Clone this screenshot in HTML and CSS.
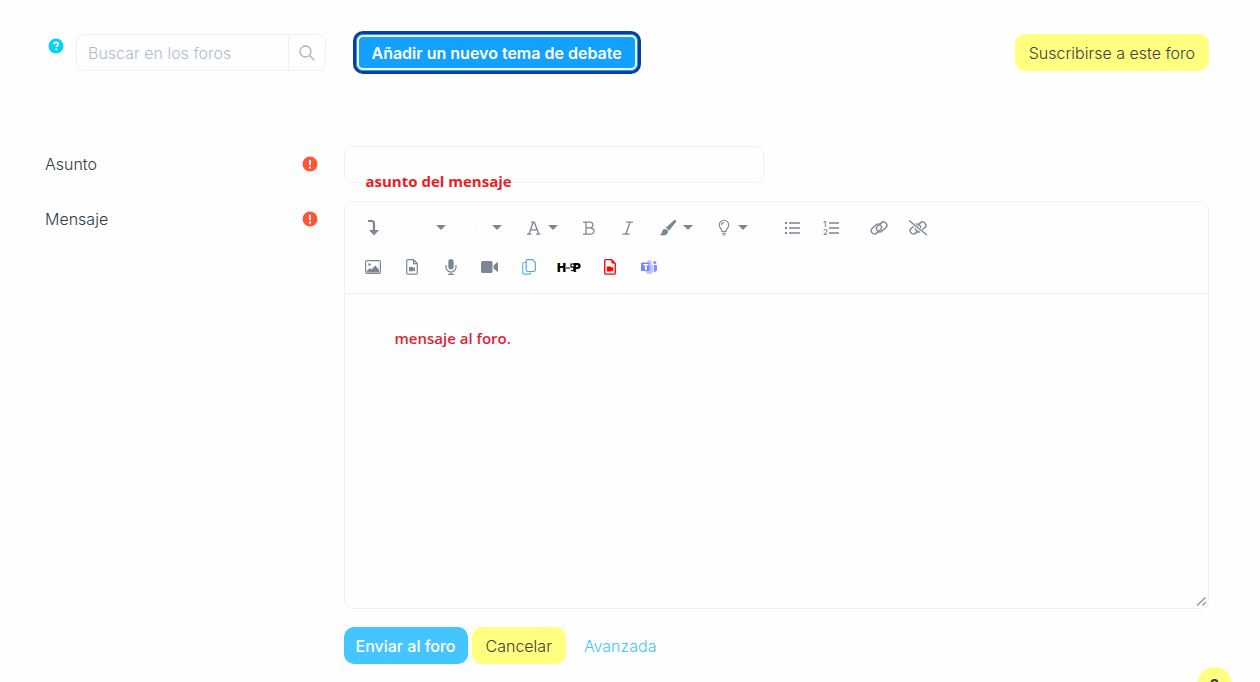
FILE: index.html
```
<!DOCTYPE html>
<html lang="es">
  <head>
    <meta charset="UTF-8" />
    <meta name="viewport" content="width=device-width, initial-scale=1.0" />
    <title>Foro</title>
    <link rel="stylesheet" href="styles.css">
  </head>
  <body>
    <main>
      <div class="topbar">
        <div class="search-col">
          <button class="help" type="button" aria-label="Ayuda">
            <svg width="16" height="16" viewBox="0 0 16 16"><circle cx="8" cy="8" r="7.5" fill="#00d2fa"/><path d="M5.8 6.3c.2-1.3 1-1.9 2.2-1.9 1.3 0 2.3.7 2.3 1.8 0 1.4-1.9 1.5-1.9 2.7" fill="none" stroke="#fff" stroke-width="1.8"/><circle cx="8.3" cy="11.3" r="1.1" fill="#fff"/></svg>
          </button>
          <form class="search" role="search">
            <input type="text" name="search" placeholder="Buscar en los foros" aria-label="Buscar en los foros" />
            <button type="submit" aria-label="Buscar">
              <svg width="16" height="16" viewBox="0 0 16 16" fill="none" stroke="#a3b1c2" stroke-width="1.3"><circle cx="6.5" cy="6.5" r="5.5"/><path d="M10.5 10.5l4.8 4.8"/></svg>
            </button>
          </form>
        </div>
        <div class="actions-col">
          <button class="btn btn-new" type="button">Añadir un nuevo tema de debate</button>
          <button class="btn btn-yellow" type="button">Suscribirse a este foro</button>
        </div>
      </div>

      <form class="post" action="#" method="post">
        <div class="row">
          <div class="label-col">
            <label for="subject">Asunto</label>
            <svg class="required" width="16" height="16" viewBox="0 0 16 16" role="img" aria-label="Obligatorio"><circle cx="8" cy="8" r="7.5" fill="#ff5638"/><path d="M8 4v5M8 10.5v2" stroke="#fff" stroke-width="2"/></svg>
          </div>
          <div class="field-col">
            <div class="subject">
              <input type="text" id="subject" name="subject" />
              <span class="note">asunto del mensaje</span>
            </div>
          </div>
        </div>

        <div class="row">
          <div class="label-col">
            <label for="message">Mensaje</label>
            <svg class="required" width="16" height="16" viewBox="0 0 16 16" role="img" aria-label="Obligatorio"><circle cx="8" cy="8" r="7.5" fill="#ff5638"/><path d="M8 4v5M8 10.5v2" stroke="#fff" stroke-width="2"/></svg>
          </div>
          <div class="field-col">
            <div class="editor">
              <div class="toolbar">
                <div class="tool-row">
                  <div class="group">
                    <button type="button" aria-label="Mostrar más botones"><svg width="16" height="18" viewBox="0 0 16 18"><path d="M3 2h3.500Q9 2 9 4.500V12" fill="none" stroke="#7b8794" stroke-width="2.2"/><path d="M4 11h10L9 16.500z" fill="#7b8794"/></svg></button>
                  </div>
                  <div class="group">
                    <button class="drop" type="button" aria-label="Estilos"><svg width="16" height="16" viewBox="0 0 16 16"><path d="M3 3h8M3 8h5M8 13h3" stroke="#fafafa"/></svg><i class="caret"></i></button>
                    <button class="drop" type="button" aria-label="Tamaño"><svg width="16" height="16" viewBox="0 0 16 16"><path d="M2 2h8M6 2v12M12 6v8" stroke="#fafafa"/></svg><i class="caret"></i></button>
                    <button class="drop" type="button" aria-label="Color de texto"><svg width="16" height="16" viewBox="0 0 16 16" fill="none" stroke="#7b8794" stroke-width="1.3"><path d="M3 14L7.300 2.200h1L12.800 14M4.500 9.800h6.800M5 2.200h3M1 14.200h4.500M10 14.200h4.500"/></svg><i class="caret"></i></button>
                    <button type="button" aria-label="Negrita"><svg width="14" height="16" viewBox="0 0 14 16" fill="none" stroke="#7b8794" stroke-width="1.3"><path d="M1 2.200H7.500C12 2.200 12 7.800 7.500 7.800H4M7.500 7.800C13.500 7.800 13.500 14.200 8 14.200H1M4 2.200v12"/></svg></button>
                    <button type="button" aria-label="Cursiva"><svg width="14" height="16" viewBox="0 0 14 16" fill="none" stroke="#7b8794" stroke-width="1.3"><path d="M5 2.200h7M1.500 14.200h7M9 2.200L4.800 14.200"/></svg></button>
                    <button class="drop" type="button" aria-label="Color de fondo"><svg width="18" height="18" viewBox="0 0 18 18" fill="#7b8794"><path d="M16.800 1.200c-.7-.5-1.600-.1-2.300.5L6.500 9c1.700.3 2.800 1.400 3.200 3l6.800-8.300c.6-.8 1-1.900.3-2.500zM6.200 10c-2 0-2.900 1.300-3.200 3-.2 1.300-1.200 2.200-2.400 2.200 2.200 2.300 8.300 1.700 8.400-2.400 0-1.500-1.200-2.800-2.800-2.800z"/></svg><i class="caret"></i></button>
                    <button class="drop" type="button" aria-label="Sugerencias"><svg width="16" height="18" viewBox="0 0 16 18" fill="none" stroke="#7b8794" stroke-width="1.1"><path d="M6 12.500C6 10 3.300 9 3.300 6a4.700 4.700 0 019.400 0c0 3-2.700 4-2.700 6.500zM6 14.200h4M6.500 16h3M5.500 6c0-1.500 1-2.500 2.500-2.500"/></svg><i class="caret"></i></button>
                  </div>
                  <div class="group lists">
                    <button type="button" aria-label="Lista"><svg width="16" height="16" viewBox="0 0 16 16" stroke="#7b8794" stroke-width="1.4"><path d="M5 3h11M5 8h11M5 13h11"/><path d="M1 3h2M1 8h2M1 13h2" stroke-width="2"/></svg></button>
                    <button type="button" aria-label="Lista numerada"><svg width="16" height="18" viewBox="0 0 16 18" fill="none" stroke="#7b8794" stroke-width="1.4"><path d="M6 4h10M6 9h10M6 14h10"/><text x="0" y="8" class="digit">1</text><text x="0" y="16" class="digit">2</text></svg></button>
                  </div>
                  <div class="group">
                    <button type="button" aria-label="Enlace"><svg width="20" height="18" viewBox="0 0 20 18" fill="none" stroke="#7b8794" stroke-width="1.4"><rect x="1.500" y="7" width="11.500" height="6.500" rx="3.200" transform="rotate(-42 7 10)"/><rect x="7" y="4.500" width="11.500" height="6.500" rx="3.200" transform="rotate(-42 13 8)"/></svg></button>
                    <button type="button" aria-label="Quitar enlace"><svg width="20" height="18" viewBox="0 0 20 18" fill="none" stroke="#7b8794" stroke-width="1.4"><rect x="1.500" y="7" width="11.500" height="6.500" rx="3.200" transform="rotate(-42 7 10)"/><rect x="7" y="4.500" width="11.500" height="6.500" rx="3.200" transform="rotate(-42 13 8)"/><path d="M1.500 2l17 14" stroke="#fff" stroke-width="3"/><path d="M1 1.500l18 14.500"/></svg></button>
                  </div>
                </div>
                <div class="tool-row">
                  <div class="group">
                    <button type="button" aria-label="Imagen"><svg width="16" height="14" viewBox="0 0 16 14"><rect x=".6" y=".6" width="14.800" height="12.800" rx="1.500" fill="none" stroke="#7b8794" stroke-width="1.2"/><circle cx="4.500" cy="4.500" r="1.300" fill="#7b8794"/><path d="M2 12.500V10.500L5 8l1.500 1.500L10.300 5.500l3.700 4v3z" fill="#7b8794"/></svg></button>
                    <button type="button" aria-label="Archivo multimedia"><svg width="12" height="16" viewBox="0 0 12 16"><path d="M2 .7h5.500L11.300 4.500V14q0 1.200-1.200 1.200H2Q.7 15.200.7 14V2Q.7.700 2 .7zM7.500.7v4h3.800" fill="none" stroke="#7b8794" stroke-width="1.2"/><path d="M3 8h4v1.500L9 8v4.500L7 11.500v.7H3z" fill="#7b8794"/></svg></button>
                    <button type="button" aria-label="Grabar audio"><svg width="12" height="16" viewBox="0 0 12 16"><rect x="3.300" y="0" width="5.400" height="10.500" rx="2.700" fill="#7b8794"/><path d="M1 6v2a5 5 0 0010 0V6M6 13v2.500M3 15.300h6" fill="none" stroke="#7b8794" stroke-width="1.2"/></svg></button>
                    <button type="button" aria-label="Grabar vídeo"><svg width="18" height="12" viewBox="0 0 18 12" fill="#7b8794"><rect width="11.500" height="12" rx="1.500"/><path d="M12.500 4.500L17 .8v10.400l-4.500-3.700z"/></svg></button>
                    <button type="button" aria-label="Administrar archivos"><svg width="14" height="16" viewBox="0 0 14 16" fill="none" stroke-width="1.2"><path d="M4 3.500H2Q.7 3.500.7 5v9q0 1.200 1.300 1.200h5.500q1.300 0 1.300-1.700" stroke="#3fc4f0"/><path d="M5.500.7h5L13.300 3.500V11q0 1.500-1.300 1.500H5.500Q4.200 12.500 4.200 11V2Q4.200.7 5.500.7z" stroke="#5fa4cc"/></svg></button>
                    <button class="h5p" type="button" aria-label="H5P"><svg width="26" height="14" viewBox="0 0 26 14"><text x="0" y="12">H</text><path d="M9 8h4M17 4h-3v3q3-.5 3 1.800T14 10.500" fill="none" stroke="#000" stroke-width="1.1"/><text x="16" y="12">P</text></svg></button>
                    <button type="button" aria-label="Vídeo"><svg width="12" height="16" viewBox="0 0 12 16"><path d="M2 .7h5.500L11.300 4.500V14q0 1.200-1.200 1.200H2Q.7 15.200.7 14V2Q.7.700 2 .7z" fill="none" stroke="#f00" stroke-width="1.3"/><path d="M7.500.5L11.500 4.500h-4zM2.800 7.500h4.500v1.500L9.300 7.800v4.700l-2-1v1H2.800z" fill="#f00"/></svg></button>
                    <button type="button" aria-label="Teams"><svg width="18" height="16" viewBox="0 0 18 16"><circle cx="9.500" cy="3.500" r="2.500" fill="#c5caff"/><circle cx="14.800" cy="3.500" r="1.600" fill="#8b8cff"/><path d="M5.500 6h8v5q0 4-4 4t-4-4z" fill="#b8c6ff"/><path d="M14 6h3v4q0 3-3 3z" fill="#8b8cff"/><rect x="1" y="3.500" width="8.500" height="8.500" rx="1" fill="#7b83f5"/><text x="3" y="11" class="teams">T</text></svg></button>
                  </div>
                </div>
              </div>
              <textarea id="message" name="message">mensaje al foro.</textarea>
              <svg class="resize" width="11" height="11" viewBox="0 0 11 11" fill="none" stroke="#999" stroke-width="1.5"><path d="M1 9.500L9.500 1.500M6.500 9.500l3.500-3.500"/></svg>
            </div>
            <div class="buttons">
              <button class="btn btn-send" type="submit">Enviar al foro</button>
              <button class="btn btn-yellow" type="button">Cancelar</button>
              <a class="advanced" href="#">Avanzada</a>
            </div>
          </div>
        </div>
      </form>
    </main>

    <button class="float-help" type="button">?</button>
  </body>
</html>
```
FILE: styles.css
```
* {
  box-sizing: border-box;
}

body {
  margin: 0;
  background-color: #fefefe;
  color: #2f3a45;
  font-family: Inter, "Open Sans", sans-serif;
  font-size: 16px;
  font-weight: 300;
  line-height: 22px;
}

main {
  padding: 31px 36px 0 30px;
}

input,
textarea,
button {
  font: inherit;
  color: inherit;
}

button {
  padding: 0;
  border: none;
  background: none;
  cursor: pointer;
}

svg {
  display: block;
}

/* two columns, shared by the top bar and the form rows */
.topbar,
.row {
  display: grid;
  grid-template-columns: 1fr 3fr;
}

.topbar {
  margin-bottom: 72px;
}

.search-col,
.actions-col,
.label-col,
.field-col {
  min-width: 0;
  padding: 0 15px;
}

.search-col {
  display: flex;
  align-items: flex-start;
  padding: 3px 0 0 18px;
}

.help {
  margin-top: 4px;
}

.search {
  display: flex;
  flex: 1;
  min-width: 0;
  height: 37px;
  margin: 0 3px 0 12px;
  border: 1px solid #e9f3fd;
  border-radius: 8px;
}

.search input {
  flex: 1;
  min-width: 0;
  padding: 0 11px;
  border: none;
  background: none;
}

.search input::placeholder {
  color: #aebdcc;
}

.search button {
  display: flex;
  align-items: center;
  justify-content: center;
  width: 37px;
  border-left: 1px solid #e9f3fd;
}

.actions-col {
  display: flex;
  align-items: center;
  justify-content: space-between;
  padding-left: 24px;
}

.btn {
  height: 37px;
  padding: 0 14px;
  border-radius: 10px;
  white-space: nowrap;
}

.btn-new {
  height: 43px;
  border: 3px solid #06409a;
  padding: 0 16px;
  background-color: #14a0ff;
  box-shadow: inset 0 0 0 1px #14a0ff, inset 0 0 0 3px #fff;
  color: #fff;
  font-weight: 600;
}

.btn-yellow {
  background-color: #ffff80;
  color: #443c3c;
}

.btn-send {
  padding: 0 12px;
  background-color: #45c5ff;
  color: #fff;
  font-weight: 500;
}

.row {
  margin-bottom: 18px;
}

.label-col {
  display: flex;
  align-items: flex-start;
  justify-content: space-between;
  padding-top: 7px;
  padding-right: 11px;
}

.required {
  margin-top: 3px;
}

.subject {
  position: relative;
  max-width: 420px;
}

.subject input {
  display: block;
  width: 100%;
  height: 37px;
  padding: 0 13px;
  border: 1px solid #e9f3fd;
  border-radius: 8px;
  background: none;
}

/* sits over the lower border of the subject box */
.note {
  position: absolute;
  top: 24px;
  left: 22px;
  color: #ed1c24;
  font-family: "Open Sans", sans-serif;
  font-size: 15px;
  font-weight: 700;
  white-space: nowrap;
}

.editor {
  position: relative;
  border: 1px solid #e9f3fd;
  border-radius: 8px;
}

.toolbar {
  padding: 6px 9px 7px;
  border-bottom: 1px solid #e9f3fd;
}

.tool-row {
  display: flex;
  flex-wrap: wrap;
  gap: 9px;
}

.group {
  display: flex;
}

.group button {
  display: flex;
  align-items: center;
  justify-content: center;
  width: 39px;
  height: 39px;
}

.group .drop {
  gap: 6px;
  width: 56px;
}

.lists {
  margin-left: 4px;
}

.group .h5p {
  width: 42px;
}

.caret {
  border: 5px solid transparent;
  border-top-color: #7b8794;
  border-bottom: none;
}

.group text {
  fill: #000;
  font-family: Inter, sans-serif;
  font-size: 12px;
  font-weight: 900;
}

.group .digit {
  fill: #7b8794;
  stroke: none;
  font-size: 8px;
  font-weight: 600;
}

.group .teams {
  fill: #fff;
  font-size: 8px;
}

.editor textarea {
  display: block;
  width: 100%;
  height: 314px;
  padding: 33px 50px;
  border: none;
  background: none;
  color: #dc2434;
  font-family: "Open Sans", sans-serif;
  font-size: 15px;
  font-weight: 600;
  resize: none;
}

.resize {
  position: absolute;
  right: 1px;
  bottom: 1px;
}

.buttons {
  display: flex;
  align-items: center;
  gap: 4px;
  margin-top: 18px;
}

.advanced {
  margin-left: 14px;
  color: #45c5ff;
  text-decoration: none;
}

.float-help {
  position: fixed;
  right: 28px;
  bottom: -20px;
  width: 35px;
  height: 35px;
  border-radius: 50%;
  background-color: #ffff80;
  color: #443c3c;
  font-weight: 700;
}
```
